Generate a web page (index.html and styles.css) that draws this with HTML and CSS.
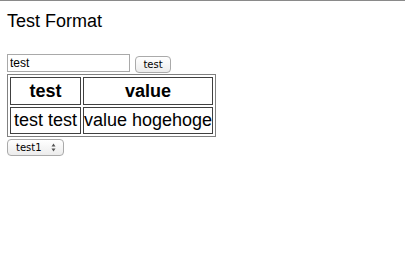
FILE: index.html
```html
<!DOCTYPE html>
<html lang="en">
<head>
    <meta charset="UTF-8">
    <title>Test Format</title>
    <link rel="stylesheet" href="styles.css">
</head>
<body>
    <div class="topline"></div>
    <div class="page">
        <h1 class="title">Test Format</h1>

        <div class="form">
            <input type="text" class="field" value="test">
            <button class="btn">test</button>
        </div>

        <table class="grid">
            <tr>
                <th class="col1">test</th>
                <th class="col2">value</th>
            </tr>
            <tr>
                <td>test test</td>
                <td>value hogehoge</td>
            </tr>
        </table>

        <div class="picker">
            <span>test1</span>
            <svg class="arrows" width="5" height="9" viewBox="0 0 5 9">
                <path d="M0.5 3.5 L2.5 0.5 L4.5 3.5 Z M0.5 5.5 L2.5 8.5 L4.5 5.5 Z" fill="#555"/>
            </svg>
        </div>
    </div>
</body>
</html>
```

FILE: styles.css
```css
*{
    margin: 0;
    padding: 0;
    box-sizing: border-box;
}
body{
    font-family: "Liberation Sans", Arial, sans-serif;
    color: #000;
    background-color: #fff;
}
.topline{
    height: 1px;
    background-color: #8a8a8a;
}
.page{
    padding: 0 7px;
}
.title{
    font-size: 18px;
    font-weight: normal;
    padding-top: 10px;
    height: 52px;
}
.form{
    display: flex;
    align-items: center;
    gap: 5px;
    height: 20px;
}
.field{
    width: 123px;
    height: 18px;
    border: 1px solid #a9a9a9;
    font-family: "Liberation Sans", Arial, sans-serif;
    font-size: 12px;
    padding: 0 2px;
    outline: none;
}
.btn{
    width: 36px;
    height: 17px;
    margin-top: 2px;
    border: 1px solid #aaa;
    border-radius: 4px;
    background: linear-gradient(#fff, #ececec);
    font-family: "DejaVu Sans", sans-serif;
    font-size: 10px;
}
.grid{
    border: 1px solid #808080;
    border-spacing: 2px;
    margin-top: 1px;
}
.grid th, .grid td{
    border: 1px solid #404040;
    font-size: 18px;
    height: 28px;
    padding: 0;
    text-align: center;
    white-space: nowrap;
}
.grid th{
    font-weight: bold;
}
.grid .col1{
    width: 71px;
}
.grid .col2{
    width: 130px;
}
.grid td{
    height: 27px;
}
.picker{
    display: flex;
    align-items: center;
    justify-content: space-between;
    width: 57px;
    height: 17px;
    margin-top: 2px;
    padding: 0 7px 0 8px;
    border: 1px solid #aaa;
    border-radius: 4px;
    background: linear-gradient(#fff, #ececec);
    font-family: "DejaVu Sans", sans-serif;
    font-size: 10px;
}
.arrows{
    display: block;
}
```
